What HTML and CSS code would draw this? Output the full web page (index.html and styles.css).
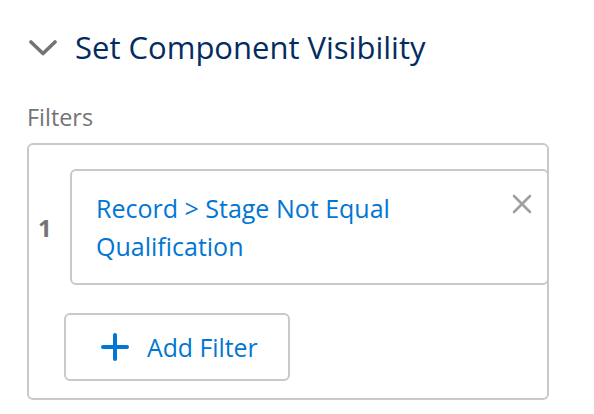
FILE: index.html
```html
<!DOCTYPE html>
<html>
<head>
<meta charset="utf-8">
<link rel="stylesheet" href="styles.css">
</head>
<body>
<div class="panel">
  <div class="section-header">
    <svg class="chev" width="28" height="16" viewBox="0 0 28 16"><path d="M2 2 L14 13.5 L26 2" fill="none" stroke="#747474" stroke-width="3.6" stroke-linecap="round" stroke-linejoin="round"/></svg>
    <h2 class="title">Set Component Visibility</h2>
  </div>
  <div class="label">Filters</div>
  <div class="box">
    <div class="row">
      <div class="num">1</div>
      <div class="card">
        <div class="filter-text">Record &gt; Stage Not Equal Qualification</div>
        <svg class="close" width="20" height="20" viewBox="0 0 20 20"><path d="M2 2 L18 18 M18 2 L2 18" fill="none" stroke="#a0a0a0" stroke-width="2.6" stroke-linecap="round"/></svg>
      </div>
    </div>
    <button class="add-btn">
      <svg class="plus" width="28" height="28" viewBox="0 0 28 28"><path d="M14 2 V26 M2 14 H26" fill="none" stroke="#0176d3" stroke-width="4" stroke-linecap="round"/></svg>
      <span>Add Filter</span>
    </button>
  </div>
</div>
</body>
</html>
```
FILE: styles.css
```css
html, body {
  margin: 0;
  padding: 0;
  background: #ffffff;
}
body {
  font-family: "Open Sans", "Noto Sans", sans-serif;
}
.panel {
  width: 522px;
  padding: 0 0 0 27px;
}
.section-header {
  display: flex;
  align-items: center;
  height: 94px;
  margin-top: 0;
}
.chev {
  margin-left: 2px;
  margin-top: 2px;
}
.title {
  margin: 0 0 0 18px;
  font-size: 31px;
  font-weight: 400;
  color: #032d60;
  line-height: 1;
}
.label {
  font-size: 23.4px;
  color: #747474;
  line-height: 1;
  margin-top: 12px;
}
.box {
  margin-top: 14px;
  border: 2px solid #c9c9c9;
  border-radius: 6px;
  padding: 24px 0 17px 0;
}
.row {
  display: flex;
  align-items: center;
}
.num {
  width: 32px;
  padding-left: 9px;
  font-size: 24px;
  font-weight: 700;
  color: #747474;
}
.card {
  flex: 1;
  margin-right: -2px;
  border: 2px solid #c9c9c9;
  border-radius: 6px;
  padding: 18px 15px 18px 24px;
  display: flex;
  align-items: flex-start;
}
.filter-text {
  flex: 1;
  font-size: 25px;
  line-height: 38px;
  color: #0176d3;
  max-width: 330px;
}
.close {
  margin-top: 5px;
  margin-left: auto;
}
.add-btn {
  margin: 28px 0 0 35px;
  width: 226px;
  height: 68px;
  border: 2px solid #c9c9c9;
  border-radius: 6px;
  background: #fff;
  display: flex;
  align-items: center;
  padding: 0 0 0 35px;
  font-family: "Open Sans", "Noto Sans", sans-serif;
  font-size: 24.8px;
  color: #0176d3;
}
.plus {
  margin-right: 18px;
}
```
